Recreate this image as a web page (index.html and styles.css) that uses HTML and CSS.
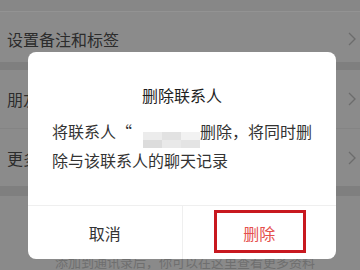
FILE: index.html
```html
<!DOCTYPE html>
<html lang="zh">
<head>
<meta charset="utf-8">
<link rel="stylesheet" href="styles.css">
</head>
<body>
<div class="page">
  <div class="top"></div>
  <div class="row r1">
    <span class="label">设置备注和标签</span>
    <svg class="chev" width="8" height="14" viewBox="0 0 8 14"><polyline points="1,1 7,7 1,13" fill="none" stroke="#6c6c6c" stroke-width="1.3"/></svg>
  </div>
  <div class="band"></div>
  <div class="row r2">
    <span class="label">朋友权限</span>
    <svg class="chev" width="8" height="14" viewBox="0 0 8 14"><polyline points="1,1 7,7 1,13" fill="none" stroke="#6c6c6c" stroke-width="1.3"/></svg>
  </div>
  <div class="row r3">
    <span class="label">更多信息</span>
    <svg class="chev" width="8" height="14" viewBox="0 0 8 14"><polyline points="1,1 7,7 1,13" fill="none" stroke="#6c6c6c" stroke-width="1.3"/></svg>
  </div>
  <div class="band band2"></div>
  <div class="foot">添加到通讯录后，你可以在这里查看更多资料</div>

  <div class="dialog">
    <div class="title">删除联系人</div>
    <div class="body">
      <span class="line">将联系人“<span class="blur"><i class="b1"></i><i class="b2"></i><i class="b3"></i><i class="b4"></i><i class="b5"></i><i class="b6"></i></span>删除，将同时删</span>
      <span class="line">除与该联系人的聊天记录</span>
    </div>
    <div class="actions">
      <div class="btn cancel">取消</div>
      <div class="btn del">删除<span class="mark"></span></div>
    </div>
  </div>
</div>
</body>
</html>
```

FILE: styles.css
```css
* { box-sizing: border-box; }
html, body { margin: 0; padding: 0; }
body {
  width: 360px;
  height: 270px;
  overflow: hidden;
  font-family: "Noto Sans CJK SC", "Noto Sans", sans-serif;
  background: #8a8a8a;
}
.page {
  position: relative;
  width: 360px;
  height: 270px;
  display: flex;
  flex-direction: column;
  background: #8a8a8a;
}
.top {
  height: 12px;
  border-bottom: 1px solid #939393;
  background: #878787;
}
.row {
  display: flex;
  align-items: center;
  justify-content: space-between;
  padding: 0 4px 0 7px;
  background: #8b8b8b;
}
.r1 { height: 51px; padding-top: 4px; }
.r2 { height: 61px; border-bottom: 1px solid #848484; }
.r3 { height: 58px; }
.label {
  font-size: 16px;
  color: #2c2c2c;
  line-height: 22px;
}
.band {
  height: 8px;
  background: #7f7f7f;
}
.band2 { height: 10px; }
.foot {
  padding: 58px 0 0 55px;
  font-size: 13px;
  color: #6f6f6f;
  line-height: 16px;
  white-space: nowrap;
}

.dialog {
  position: absolute;
  left: 28px;
  top: 52px;
  width: 308px;
  height: 207px;
  background: #fff;
  border-radius: 8px;
  display: flex;
  flex-direction: column;
  overflow: hidden;
}
.title {
  padding-top: 32px;
  text-align: center;
  font-size: 16px;
  line-height: 22px;
  color: #1e1e1e;
}
.body {
  flex: 1;
  padding: 13px 24px 0 24px;
  font-size: 16px;
  line-height: 24px;
  color: #333;
  display: flex;
  flex-direction: column;
}
.line { display: block; white-space: nowrap; }
.blur {
  display: inline-grid;
  grid-template-columns: repeat(3, 19px);
  grid-template-rows: 8px 8px;
  width: 68px;
  padding-left: 11px;
  vertical-align: -2px;
}
.blur i { display: block; }
.b1 { background: #ececec; }
.b2 { background: #e2e2e2; }
.b3 { background: #f2f2f2; }
.b4 { background: #dcdcdc; }
.b5 { background: #e9e9e9; }
.b6 { background: #e4e4e4; }

.actions {
  height: 54px;
  flex: none;
  display: flex;
  border-top: 1px solid #efefef;
}
.btn {
  flex: 1;
  display: flex;
  align-items: center;
  justify-content: center;
  font-size: 16px;
  color: #333;
  position: relative;
}
.cancel { border-right: 1px solid #efefef; }
.del { color: #e5504d; }
.mark {
  position: absolute;
  left: 31px;
  top: 4px;
  width: 92px;
  height: 43px;
  border: 3px solid #c8181f;
}
```
